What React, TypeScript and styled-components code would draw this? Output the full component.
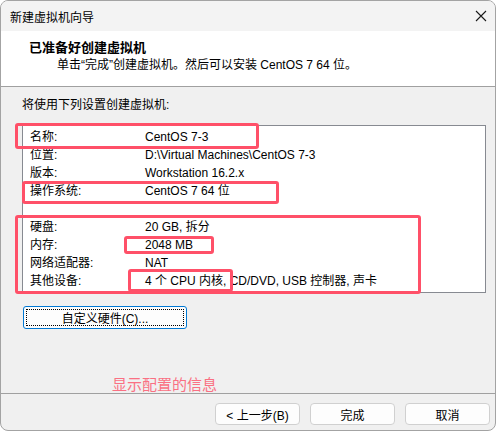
import * as React from 'react'
import styled, { createGlobalStyle } from 'styled-components'

const GlobalStyle = createGlobalStyle`
    html, body {
        margin: 0;
        padding: 0;
        background: #ffffff;
    }
    body {
        font-family: "Liberation Sans", "Noto Sans CJK SC", sans-serif;
        font-size: 12px;
        color: #000;
    }
`

const Window = styled.div`
    position: relative;
    width: 496px;
    height: 431px;
    box-sizing: border-box;
    border: 1px solid #a3a3a3;
    border-radius: 8px;
    overflow: hidden;
    background: #f0f0f0;
    display: flex;
    flex-direction: column;
`

const TitleBar = styled.div`
    height: 30px;
    display: flex;
    align-items: center;
    justify-content: space-between;
    padding: 0 8px 0 9px;
    background: #f3f3f3;
`

const TitleText = styled.span`
    font-size: 12px;
`

const Header = styled.div`
    height: 56px;
    background: #ffffff;
    border-bottom: 1px solid #a0a0a0;
    padding: 9px 0 0 28px;
    box-sizing: border-box;
`

const HeaderTitle = styled.div`
    font-weight: bold;
    font-size: 13px;
    line-height: 16px;
`

const HeaderSub = styled.div`
    margin-top: 1px;
    padding-left: 28px;
    line-height: 16px;
`

const Body = styled.div`
    flex: 1;
    padding: 10px 0 0 21px;
`

const Intro = styled.div`
    line-height: 16px;
`

const ListBox = styled.div`
    margin-top: 12px;
    width: 464px;
    height: 168px;
    box-sizing: border-box;
    border: 1px solid #878a91;
    background: #ffffff;
    padding: 2px 0 0 7px;
    display: grid;
    grid-template-columns: 115px 1fr;
    grid-auto-rows: 18px;
    align-items: center;
`

const Cell = styled.span`
    white-space: nowrap;
    height: 18px;
    line-height: 18px;
`

const CustomButton = styled.button`
    margin-top: 13px;
    margin-left: 1px;
    width: 164px;
    height: 23px;
    padding: 2px;
    border: 1px solid #0078d4;
    border-radius: 3px;
    background: #fdfdfd;
    font: inherit;
    display: flex;
`

const FocusRing = styled.span`
    flex: 1;
    border: 1px dotted #000;
    display: flex;
    align-items: center;
    justify-content: center;
`

const Footer = styled.div`
    height: 37px;
    border-top: 1px solid #a0a0a0;
    display: flex;
    justify-content: flex-end;
    align-items: flex-start;
    gap: 10px;
    padding: 9px 5px 0 0;
    box-sizing: border-box;
`

const FooterButton = styled.button`
    width: 85px;
    height: 22px;
    border: 1px solid #d0d0d0;
    border-radius: 4px;
    background: #fdfdfd;
    font: inherit;
    padding: 0;
`

const Mark = styled.div<{ $x: number; $y: number; $w: number; $h: number }>`
    position: absolute;
    left: ${p => p.$x}px;
    top: ${p => p.$y}px;
    width: ${p => p.$w}px;
    height: ${p => p.$h}px;
    box-sizing: border-box;
    border: 3px solid #ff5068;
    border-radius: 3px;
    pointer-events: none;
`

const Note = styled.div`
    position: absolute;
    left: 111px;
    top: 375px;
    font-size: 15px;
    line-height: 17px;
    color: #fa7083;
`

const rows: [string, string][] = [
    ['名称:', 'CentOS 7-3'],
    ['位置:', 'D:\\Virtual Machines\\CentOS 7-3'],
    ['版本:', 'Workstation 16.2.x'],
    ['操作系统:', 'CentOS 7 64 位'],
    ['', ''],
    ['硬盘:', '20 GB, 拆分'],
    ['内存:', '2048 MB'],
    ['网络适配器:', 'NAT'],
    ['其他设备:', '4 个 CPU 内核, CD/DVD, USB 控制器, 声卡'],
]

const CloseIcon = () => (
    <svg width="12" height="12" viewBox="0 0 12 12">
        <path d="M1 1 L11 11 M11 1 L1 11" stroke="#1a1a1a" strokeWidth="1.1" />
    </svg>
)

export default function App() {
    return (
        <>
            <GlobalStyle />
            <Window>
                <TitleBar>
                    <TitleText>新建虚拟机向导</TitleText>
                    <CloseIcon />
                </TitleBar>
                <Header>
                    <HeaderTitle>已准备好创建虚拟机</HeaderTitle>
                    <HeaderSub>单击“完成”创建虚拟机。然后可以安装 CentOS 7 64 位。</HeaderSub>
                </Header>
                <Body>
                    <Intro>将使用下列设置创建虚拟机:</Intro>
                    <ListBox>
                        {rows.map(([k, v], i) => (
                            <React.Fragment key={i}>
                                <Cell>{k}</Cell>
                                <Cell>{v}</Cell>
                            </React.Fragment>
                        ))}
                    </ListBox>
                    <CustomButton>
                        <FocusRing>自定义硬件(C)...</FocusRing>
                    </CustomButton>
                </Body>
                <Footer>
                    <FooterButton>&lt; 上一步(B)</FooterButton>
                    <FooterButton>完成</FooterButton>
                    <FooterButton>取消</FooterButton>
                </Footer>

                <Mark $x={14} $y={122} $w={244} $h={26} />
                <Mark $x={21} $y={180} $w={257} $h={23} />
                <Mark $x={14} $y={214} $w={406} $h={79} />
                <Mark $x={123} $y={235} $w={90} $h={18} />
                <Mark $x={127} $y={268} $w={105} $h={23} />
                <Note>显示配置的信息</Note>
            </Window>
        </>
    )
}
